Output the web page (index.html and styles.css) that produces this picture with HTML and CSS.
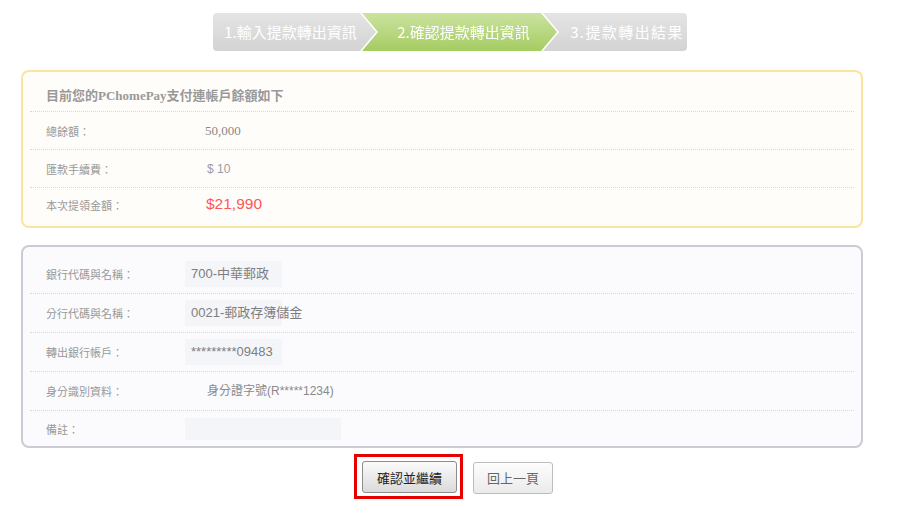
FILE: index.html
```html
<!DOCTYPE html>
<html lang="zh-Hant">
<head>
  <meta charset="UTF-8" />
  <title>確認提款轉出資訊 - PChomePay</title>
  <link rel="stylesheet" href="styles.css">
</head>
<body>

<div class="steps">
  <div class="step step-first">1.輸入提款轉出資訊</div>
  <div class="step-current">
    <div class="step step-active">2.確認提款轉出資訊</div>
  </div>
  <div class="step step-last">3.提款轉出結果</div>
</div>

<div class="panel panel-balance">
  <div class="panel-title">目前您的PChomePay支付連帳戶餘額如下</div>
  <div class="row">
    <span class="label">總餘額：</span>
    <span class="value value-serif">50,000</span>
  </div>
  <div class="row">
    <span class="label">匯款手續費：</span>
    <span class="value value-fee">$ 10</span>
  </div>
  <div class="row row-last">
    <span class="label">本次提領金額：</span>
    <span class="value value-total">$21,990</span>
  </div>
</div>

<div class="panel panel-bank">
  <div class="row">
    <span class="label">銀行代碼與名稱：</span>
    <span class="field">700-中華郵政</span>
  </div>
  <div class="row">
    <span class="label">分行代碼與名稱：</span>
    <span class="field">0021-郵政存簿儲金</span>
  </div>
  <div class="row">
    <span class="label">轉出銀行帳戶：</span>
    <span class="field">*********09483</span>
  </div>
  <div class="row">
    <span class="label">身分識別資料：</span>
    <span class="field field-plain">身分證字號(R*****1234)</span>
  </div>
  <div class="row row-last">
    <span class="label">備註：</span>
    <span class="field field-note"></span>
  </div>
</div>

<div class="actions">
  <div class="highlight">
    <button class="btn btn-confirm">確認並繼續</button>
  </div>
  <button class="btn btn-back">回上一頁</button>
</div>

</body>
</html>
```

FILE: styles.css
```css
body {
  margin: 0;
  font-family: "Liberation Sans", "Noto Sans CJK TC", sans-serif;
  background: #fff;
  color: #888;
}
.steps {
  display: flex;
  width: 474px;
  height: 38px;
  margin: 13px auto 0;
  border-radius: 4px;
  overflow: hidden;
  background: linear-gradient(#e4e4e4, #d3d3d3);
}
.step {
  height: 38px;
  line-height: 38px;
  color: #fff;
  font-family: "Noto Sans CJK TC", sans-serif;
  font-size: 15px;
  text-align: center;
  white-space: nowrap;
}
.step-first {
  width: 149px;
  padding-left: 6px;
  box-sizing: border-box;
}
.step-current {
  width: 195px;
  filter: drop-shadow(-2px 0 0 #fff) drop-shadow(2px 0 0 #fff);
}
.step-active {
  padding-left: 8px;
  background: linear-gradient(#cbe3a0, #a5cc62);
  clip-path: polygon(0 0, calc(100% - 16px) 0, 100% 50%, calc(100% - 16px) 100%, 0 100%, 16px 50%);
}
.step-last {
  flex: 1;
  padding-left: 10px;
  letter-spacing: 1.4px;
}
.panel {
  width: 842px;
  box-sizing: border-box;
  margin-left: 21px;
  padding: 0 7px;
  border: 2px solid;
  border-radius: 8px;
}
.panel-balance {
  margin-top: 19px;
  border-color: #fbe49e;
  background: #fffdf9;
}
.panel-bank {
  margin-top: 17px;
  padding-top: 8px;
  border-color: #c9ccd4;
  background: #fbfbfd;
}
.panel-title {
  height: 31px;
  line-height: 31px;
  padding: 8px 16px 0;
  border-bottom: 1px dotted #d8d8d8;
  font-family: "Liberation Serif", "Noto Sans CJK TC", serif;
  font-size: 13px;
  font-weight: bold;
  color: #999;
}
.row {
  display: flex;
  align-items: center;
  height: 37px;
  padding-left: 16px;
  border-bottom: 1px dotted #d8d8d8;
}
.panel-bank .row {
  height: 38px;
}
.row-last {
  border-bottom: none;
}
.panel-balance .row-last {
  height: 38px;
  align-items: flex-start;
  padding-top: 7px;
  box-sizing: border-box;
}
.panel-balance .row-last .label {
  margin-top: 2px;
}
.panel-bank .row-last {
  height: 35px;
}
.label {
  width: 159px;
  flex-shrink: 0;
  font-size: 11px;
  color: #999;
}
.panel-bank .label {
  width: 139px;
}
.value {
  font-size: 12px;
  color: #888;
}
.value-serif {
  font-family: "Liberation Serif", "Noto Sans CJK TC", serif;
  font-size: 13px;
}
.value-fee {
  padding-left: 2px;
  color: #9a9ca8;
}
.value-total {
  padding-left: 1px;
  font-size: 15.5px;
  color: #ff5656;
}
.field {
  width: 97px;
  height: 26px;
  line-height: 26px;
  padding-left: 6px;
  box-sizing: border-box;
  background: #f4f5f9;
  font-size: 13px;
  color: #7e7e7e;
  white-space: nowrap;
}
.field-plain {
  width: auto;
  padding-left: 22px;
  background: none;
  font-size: 12px;
  color: #8a8a8a;
}
.field-note {
  width: 156px;
  height: 22px;
}
.actions {
  display: flex;
  justify-content: center;
  align-items: center;
  gap: 10px;
  margin-top: 6px;
  padding-left: 7px;
}
.highlight {
  padding: 4px 3px 3px 5px;
  border: 3px solid #e60000;
}
.btn {
  display: block;
  height: 32px;
  border: 1px solid #8c8c8c;
  border-radius: 3px;
  background: linear-gradient(#fbfbfb, #dadada);
  font-family: "Noto Sans CJK TC", sans-serif;
  font-size: 13px;
  color: #222;
  cursor: pointer;
}
.btn-confirm {
  width: 95px;
}
.btn-back {
  width: 80px;
  margin-top: 2px;
  border-color: #bdbdbd;
  background: linear-gradient(#fdfdfd, #ebebeb);
  color: #666;
}
```
